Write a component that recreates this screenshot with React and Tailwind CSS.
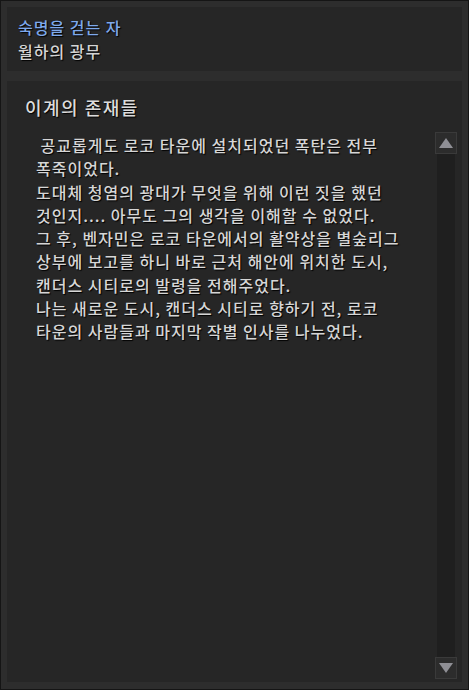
const LINES = [
  ' 공교롭게도 로코 타운에 설치되었던 폭탄은 전부',
  '폭죽이었다.',
  '도대체 청염의 광대가 무엇을 위해 이런 짓을 했던',
  '것인지.... 아무도 그의 생각을 이해할 수 없었다.',
  '그 후, 벤자민은 로코 타운에서의 활약상을 별숲리그',
  '상부에 보고를 하니 바로 근처 해안에 위치한 도시,',
  '캔더스 시티로의 발령을 전해주었다.',
  '나는 새로운 도시, 캔더스 시티로 향하기 전, 로코',
  '타운의 사람들과 마지막 작별 인사를 나누었다.',
]

const font = { fontFamily: '"Noto Sans CJK KR", "Noto Sans", sans-serif' }

function ScrollButton({ dir }) {
  return (
    <div className="w-[22px] h-[22px] shrink-0 border border-[#3a3a3a] bg-[#2c2c2c] flex items-center justify-center">
      <svg width="14" height="10" viewBox="0 0 14 10">
        {dir === 'up' ? (
          <polygon points="7,0 14,10 0,10" fill="#8f8f95" />
        ) : (
          <polygon points="0,0 14,0 7,10" fill="#8f8f95" />
        )}
      </svg>
    </div>
  )
}

export default function App() {
  return (
    <div
      className="w-[469px] h-[690px] bg-[#2d2d2d] border border-[#151515] p-[6px] pb-[7px] flex flex-col gap-[10px] font-medium [text-shadow:1px_1px_1px_#000]"
      style={font}
    >
      <div className="h-[64px] shrink-0 bg-[#262626] pl-[11px] pt-[8px] leading-[24px] text-[16px] tracking-[1px]">
        <div className="text-[#7ea9ec]">숙명을 걷는 자</div>
        <div className="text-[#d4d4d4]">월하의 광무</div>
      </div>

      <div className="flex-1 bg-[#262626] flex flex-col min-h-0">
        <div className="pl-[18px] pt-[13px] text-[18px] leading-[26px] tracking-[1.5px] text-[#dcdcdc]">이계의 존재들</div>
        <div className="flex-1 flex min-h-0 pt-[12px] pb-[3px] pr-[5px]">
          <div className="flex-1 pl-[29px] pt-[2px] text-[16px] leading-[23.3px] tracking-[1px] text-[#d6d6d6] whitespace-pre">
            {LINES.map((l, i) => (
              <div key={i}>{l}</div>
            ))}
          </div>
          <div className="w-[22px] flex flex-col">
            <ScrollButton dir="up" />
            <div className="flex-1 mx-[2px] bg-[#1f1f1f]" />
            <ScrollButton dir="down" />
          </div>
        </div>
      </div>
    </div>
  )
}
